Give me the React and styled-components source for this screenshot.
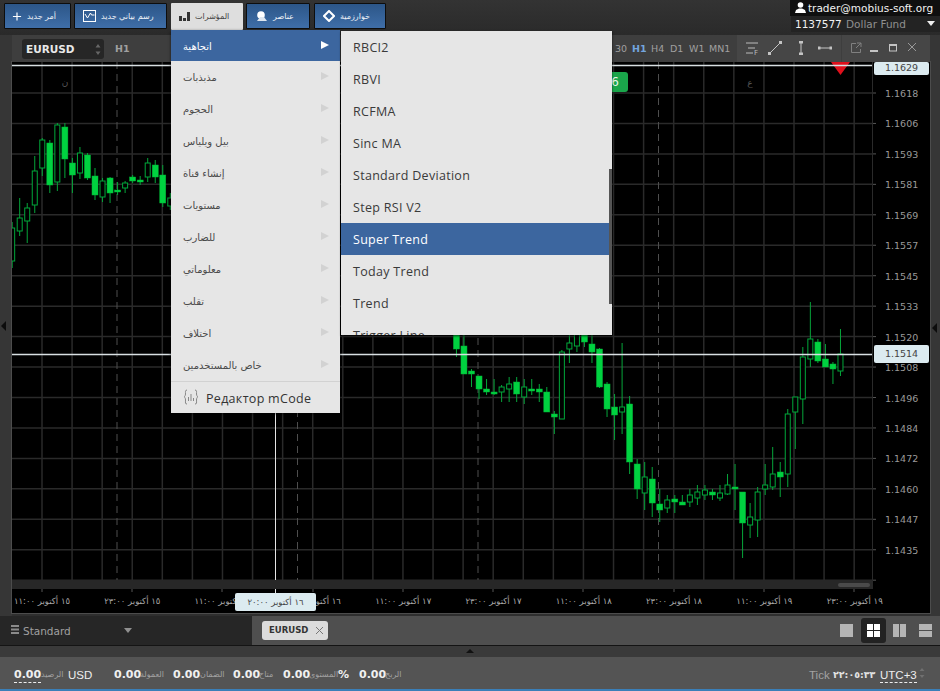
import React from 'react'
import styled, { createGlobalStyle } from 'styled-components'

const GlobalStyle = createGlobalStyle`
    html, body {
        margin: 0;
        padding: 0;
        background: #2b2b2b;
        font-family: "DejaVu Sans", sans-serif;
    }
`

const Page = styled.div`
    position: relative;
    width: 940px;
    height: 691px;
    overflow: hidden;
    background: #2f2f2f;
`

const TopBar = styled.div`
    position: absolute;
    left: 0;
    top: 0;
    width: 940px;
    height: 35px;
    background: linear-gradient(#333333, #2a2a2a);
`

const TopButton = styled.button`
    position: absolute;
    left: ${(p) => p.$left}px;
    top: 3px;
    width: ${(p) => p.$width}px;
    height: ${(p) => (p.$active ? 27 : 26)}px;
    box-sizing: border-box;
    display: flex;
    align-items: center;
    gap: 5px;
    padding: 0 0 0 ${(p) => p.$pad}px;
    border: ${(p) => (p.$active ? 'none' : '1px solid #0d0d0d')};
    border-radius: 1px;
    background: ${(p) => (p.$active ? '#dedede' : 'linear-gradient(#2c5688, #3f6ea8)')};
    color: ${(p) => (p.$active ? '#444' : '#eef2f7')};
    font-family: "DejaVu Sans", sans-serif;
    font-size: 8px;
`

const UserBox = styled.div`
    position: absolute;
    left: 790px;
    top: 0;
    width: 150px;
    height: 16px;
    background: #0f0f0f;
    color: #f2f2f2;
    font-size: 10.5px;
    line-height: 17px;
    white-space: nowrap;
`

const UserIcon = styled.svg`
    position: absolute;
    left: 5px;
    top: 2px;
`

const UserMail = styled.span`
    position: absolute;
    left: 18px;
    top: 0;
`

const AccountBox = styled.div`
    position: absolute;
    left: 791px;
    top: 16px;
    width: 149px;
    height: 16px;
    background: #232323;
    font-size: 10.5px;
    line-height: 17px;
    white-space: nowrap;
`

const AccountNumber = styled.span`
    position: absolute;
    left: 4px;
    color: #f2f2f2;
`

const AccountName = styled.span`
    position: absolute;
    left: 55px;
    color: #909090;
`

const Caret = styled.i`
    position: absolute;
    left: ${(p) => p.$left}px;
    top: ${(p) => p.$top}px;
    width: 0;
    height: 0;
    border-left: 4px solid transparent;
    border-right: 4px solid transparent;
    border-top: 5px solid ${(p) => p.$color};
`

const SideStrip = styled.div`
    position: absolute;
    top: 35px;
    left: ${(p) => p.$left}px;
    width: ${(p) => p.$width}px;
    height: 581px;
    background: #363636;
`

const SideArrow = styled.i`
    position: absolute;
    top: ${(p) => p.$top}px;
    left: ${(p) => p.$left}px;
    width: 0;
    height: 0;
    border-top: 5px solid transparent;
    border-bottom: 5px solid transparent;
    border-right: 5px solid #0c0c0c;
`

const ChartToolbar = styled.div`
    position: absolute;
    left: 12px;
    top: 35px;
    width: 918px;
    height: 27px;
    background: #3e3e3e;
`

const ToolSection = styled.div`
    position: absolute;
    left: ${(p) => p.$left}px;
    top: 0;
    width: ${(p) => p.$width}px;
    height: 27px;
    background: #464646;
`

const SymbolSelect = styled.div`
    position: absolute;
    left: 10px;
    top: 4px;
    width: 82px;
    height: 20px;
    border-radius: 3px;
    background: #262626;
    color: #e8e8e8;
    font-size: 10.5px;
    font-weight: 700;
    line-height: 20px;
    text-indent: 4px;
`

const Spinner = styled.svg`
    position: absolute;
    left: ${(p) => p.$left}px;
    top: ${(p) => p.$top}px;
`

const Timeframe = styled.span`
    position: absolute;
    left: ${(p) => p.$left}px;
    top: 7px;
    color: ${(p) => (p.$active ? '#74a5de' : '#a0a0a0')};
    font-size: 9.5px;
    font-weight: ${(p) => (p.$bold ? 700 : 400)};
    line-height: 14px;
`

const ToolIcon = styled.svg`
    position: absolute;
    left: ${(p) => p.$left}px;
    top: 6px;
`

const ChartArea = styled.div`
    position: absolute;
    left: 12px;
    top: 62px;
    width: 918px;
    height: 551px;
    background: #000;
    overflow: hidden;
`

const ChartFrame = styled.div`
    position: absolute;
    left: 11px;
    top: 61px;
    width: 920px;
    height: 553px;
    box-sizing: border-box;
    border: 1px solid #4c4c4c;
`

const ChartSvg = styled.svg`
    position: absolute;
    left: 0;
    top: 0;
`

const PriceLabel = styled.span`
    position: absolute;
    left: 873px;
    top: ${(p) => p.$top - 62 - 6}px;
    color: #9a9a9a;
    font-size: 9.5px;
    line-height: 14px;
`

const PriceTag = styled.div`
    position: absolute;
    left: 862px;
    top: ${(p) => p.$top}px;
    width: 55px;
    height: ${(p) => p.$height}px;
    box-sizing: border-box;
    border-radius: 2px;
    background: #dcebf0;
    color: #444;
    font-size: 9.5px;
    line-height: ${(p) => p.$line}px;
    text-align: center;
`

const TimeLabel = styled.span`
    position: absolute;
    left: ${(p) => p.$center - 12 - 40}px;
    top: 532px;
    width: 80px;
    color: #a8a8a8;
    font-size: 8.5px;
    line-height: 14px;
    text-align: center;
    white-space: nowrap;
`

const TimeTag = styled.div`
    position: absolute;
    left: 223px;
    top: 531px;
    width: 81px;
    height: 18px;
    border-radius: 2px;
    background: #dcebf0;
    color: #444;
    font-size: 8.5px;
    line-height: 18px;
    text-align: center;
`

const ScrollTrack = styled.div`
    position: absolute;
    left: 0;
    top: 518px;
    width: 861px;
    height: 9px;
    background: #272727;
`

const ScrollThumb = styled.div`
    position: absolute;
    left: 826px;
    top: 3px;
    width: 32px;
    height: 4px;
    border-radius: 2px;
    background: #4a4a4a;
`

const ScaleDivider = styled.div`
    position: absolute;
    left: 860px;
    top: 0;
    width: 1px;
    height: 527px;
    background: #2a2a2a;
`

const GreenBadge = styled.div`
    position: absolute;
    left: 590px;
    top: 10px;
    width: 26px;
    height: 20px;
    box-sizing: border-box;
    padding-right: 9px;
    border-radius: 3px;
    background: #1aa64b;
    color: #e8f7ec;
    font-size: 12px;
    line-height: 20px;
    text-align: right;
`

const MainMenu = styled.div`
    position: absolute;
    left: 171px;
    top: 30px;
    width: 169px;
    height: 383px;
    background: #e6e6e6;
    box-shadow: 0 1px 3px rgba(0, 0, 0, 0.6);
`

const MainItem = styled.div`
    position: relative;
    height: ${(p) => (p.$active ? 31 : 32)}px;
    padding-left: 12px;
    background: ${(p) => (p.$active ? '#3c669f' : 'transparent')};
    color: ${(p) => (p.$active ? '#fff' : '#4b4b4b')};
    font-size: 10px;
    line-height: ${(p) => (p.$active ? 33 : 34)}px;
`

const ItemArrow = styled.i`
    position: absolute;
    left: 150px;
    top: 11px;
    width: 0;
    height: 0;
    border-top: 4px solid transparent;
    border-bottom: 4px solid transparent;
    border-left: 8px solid ${(p) => (p.$active ? '#fff' : '#d2d2d2')};
`

const MenuFooter = styled.div`
    position: relative;
    height: 31px;
    border-top: 1px solid #d2d2d2;
    padding-left: 35px;
    color: #333;
    font-family: "Open Sans", sans-serif;
    font-size: 12.5px;
    line-height: 33px;
    letter-spacing: 0.3px;
`

const CodeIcon = styled.svg`
    position: absolute;
    left: 12px;
    top: 7px;
`

const SubMenu = styled.div`
    position: absolute;
    left: 341px;
    top: 31px;
    width: 271px;
    height: 304px;
    overflow: hidden;
    background: #e6e6e6;
    box-shadow: 0 1px 2px rgba(0, 0, 0, 0.7);
`

const SubItem = styled.div`
    height: 32px;
    padding-left: 12px;
    background: ${(p) => (p.$active ? '#3c669f' : 'transparent')};
    color: ${(p) => (p.$active ? '#fff' : '#3a3a3a')};
    font-family: "Open Sans", sans-serif;
    font-size: 12.5px;
    line-height: 34px;
    letter-spacing: 0.3px;
`

const SubScroll = styled.div`
    position: absolute;
    left: 268px;
    top: 138px;
    width: 3px;
    height: 135px;
    background: #555;
`

const TabBar = styled.div`
    position: absolute;
    left: 0;
    top: 616px;
    width: 940px;
    height: 29px;
    background: #4f4f4f;
`

const ProfilePanel = styled.div`
    position: absolute;
    left: 0;
    top: 0;
    width: 252px;
    height: 29px;
    background: #262626;
    color: #a0a0a0;
    font-size: 10.5px;
    line-height: 30px;
`

const ProfileName = styled.span`
    position: absolute;
    left: 23px;
`

const ChartTab = styled.div`
    position: absolute;
    left: 262px;
    top: 5px;
    width: 66px;
    height: 19px;
    border-radius: 3px;
    background: #dcdcdc;
    color: #333;
    font-size: 8.5px;
    font-weight: 700;
    line-height: 19px;
    text-indent: 7px;
`

const TabClose = styled.svg`
    position: absolute;
    left: 53px;
    top: 5px;
`

const LayoutButton = styled.div`
    position: absolute;
    left: ${(p) => p.$left}px;
    top: 2px;
    width: 25px;
    height: 25px;
    border-radius: 3px;
    background: ${(p) => (p.$active ? '#222' : 'transparent')};
    display: flex;
    align-items: center;
    justify-content: center;
`

const GripStrip = styled.div`
    position: absolute;
    left: 0;
    top: 645px;
    width: 940px;
    height: 12px;
    box-sizing: border-box;
    border-top: 1px solid #141414;
    background: #3a3a3a;
`

const StripArrow = styled.i`
    position: absolute;
    left: 466px;
    top: 3px;
    width: 0;
    height: 0;
    border-left: 4px solid transparent;
    border-right: 4px solid transparent;
    border-bottom: 4px solid #111;
`

const StatusBar = styled.div`
    position: absolute;
    left: 0;
    top: 657px;
    width: 940px;
    height: 32px;
    background: #545454;
`

const BlueLine = styled.div`
    position: absolute;
    left: 0;
    top: 689px;
    width: 940px;
    height: 2px;
    background: #3a7fb8;
`

const StatusValue = styled.span`
    position: absolute;
    left: ${(p) => p.$left}px;
    top: 11px;
    color: #f0f0f0;
    font-size: 11px;
    font-weight: 700;
    line-height: 14px;
    ${(p) => p.$dashed && 'border-bottom: 1px dashed #eee;'}
`

const StatusCaption = styled.span`
    position: absolute;
    left: ${(p) => p.$left}px;
    top: 11px;
    color: #a2a2a2;
    font-size: 8px;
    line-height: 14px;
    white-space: nowrap;
`

const ClockText = styled.span`
    position: absolute;
    left: 833px;
    top: 11px;
    color: #e2e2e2;
    font-size: 9.5px;
    font-weight: 700;
    line-height: 14px;
    white-space: nowrap;
`

const StatusPlain = styled.span`
    position: absolute;
    left: ${(p) => p.$left}px;
    top: 11px;
    color: ${(p) => p.$color};
    font-family: "Liberation Sans", sans-serif;
    font-size: 11.5px;
    line-height: 14px;
    ${(p) => p.$dashed && 'border-bottom: 1px dashed #eee;'}
`

// x of a candle comes from its index, y values are page pixels
// [index, high, low, bodyTop, bodyBottom, filled]
const candles = [
    [-1, 222, 268, 228, 261, 0],
    [0, 198, 236, 218, 231, 0],
    [1, 203, 243, 208, 221, 0],
    [2, 156, 213, 171, 205, 0],
    [3, 138, 176, 140, 168, 0],
    [4, 140, 193, 143, 185, 1],
    [5, 123, 191, 125, 182, 0],
    [6, 123, 178, 127, 159, 1],
    [7, 158, 193, 163, 175, 1],
    [8, 147, 179, 153, 173, 0],
    [9, 153, 180, 155, 178, 1],
    [10, 168, 200, 176, 195, 1],
    [11, 178, 202, 181, 197, 0],
    [12, 177, 203, 178, 193, 1],
    [13, 182, 195, 190, 192, 1],
    [14, 181, 193, 183, 188, 0],
    [15, 175, 183, 177, 181, 1],
    [16, 176, 185, 180, 182, 1],
    [17, 158, 182, 163, 177, 0],
    [18, 160, 183, 165, 177, 1],
    [19, 165, 207, 175, 203, 1],
    [20, 193, 210, 198, 206, 0],
    [58, 330, 357, 330, 349, 1],
    [59, 330, 374, 346, 374, 1],
    [60, 369, 387, 371, 374, 1],
    [61, 376, 399, 376, 389, 1],
    [62, 379, 395, 389, 392, 1],
    [63, 379, 395, 392, 394, 1],
    [64, 385, 402, 387, 392, 0],
    [65, 377, 402, 384, 389, 0],
    [66, 377, 402, 382, 394, 1],
    [67, 379, 404, 387, 397, 0],
    [68, 379, 395, 389, 391, 1],
    [69, 384, 402, 389, 392, 1],
    [70, 387, 412, 392, 412, 1],
    [71, 411, 434, 414, 417, 1],
    [72, 350, 419, 352, 419, 0],
    [73, 330, 363, 343, 349, 0],
    [74, 330, 352, 330, 346, 0],
    [75, 330, 347, 330, 342, 1],
    [76, 330, 363, 344, 352, 1],
    [77, 348, 388, 349, 387, 1],
    [78, 382, 417, 384, 409, 1],
    [79, 394, 440, 407, 415, 1],
    [80, 343, 434, 407, 412, 0],
    [81, 396, 474, 404, 462, 1],
    [82, 459, 499, 464, 489, 1],
    [83, 462, 510, 477, 493, 0],
    [84, 467, 517, 479, 503, 1],
    [85, 489, 522, 504, 510, 1],
    [86, 495, 513, 500, 508, 0],
    [87, 495, 513, 499, 502, 1],
    [88, 495, 505, 502, 505, 1],
    [89, 489, 507, 495, 502, 0],
    [90, 485, 505, 492, 498, 0],
    [91, 485, 500, 490, 495, 0],
    [92, 489, 500, 492, 495, 1],
    [93, 485, 501, 493, 498, 0],
    [94, 474, 495, 485, 494, 0],
    [95, 464, 510, 487, 489, 1],
    [96, 492, 558, 492, 523, 1],
    [97, 503, 538, 517, 525, 0],
    [98, 487, 537, 492, 520, 0],
    [99, 464, 495, 485, 489, 0],
    [100, 447, 490, 474, 487, 0],
    [101, 462, 497, 472, 477, 1],
    [102, 409, 487, 414, 474, 0],
    [103, 397, 449, 397, 412, 0],
    [104, 347, 424, 357, 399, 0],
    [105, 302, 367, 339, 359, 0],
    [106, 339, 363, 342, 361, 1],
    [107, 344, 367, 359, 367, 1],
    [108, 362, 384, 364, 369, 1],
    [109, 329, 376, 354, 371, 0],
]

const priceLabels = ['1.1618', '1.1606', '1.1593', '1.1581', '1.1569', '1.1557', '1.1545', '1.1533', '1.1520', '1.1508', '1.1496', '1.1484', '1.1472', '1.1460', '1.1447', '1.1435']

const timeLabels = ['١٥ أكتوبر ١١:٠٠', '١٥ أكتوبر ٢٣:٠٠', '١٦ أكتوبر ١١:٠٠', '١٦ أكتوبر ٢٣:٠٠', '١٧ أكتوبر ١١:٠٠', '١٧ أكتوبر ٢٣:٠٠', '١٨ أكتوبر ١١:٠٠', '١٨ أكتوبر ٢٣:٠٠', '١٩ أكتوبر ١١:٠٠', '١٩ أكتوبر ٢٣:٠٠']

const mainItems = ['اتجاهية', 'مذبذبات', 'الحجوم', 'بيل ويلياس', 'إنشاء قناة', 'مستويات', 'للضارب', 'معلوماتي', 'تقلب', 'اختلاف', 'خاص بالمستخدمين']

const subItems = ['RBCI2', 'RBVI', 'RCFMA', 'Sinc MA', 'Standard Deviation', 'Step RSI V2', 'Super Trend', 'Today Trend', 'Trend', 'Trigger Line']

const timeframes = [
    { label: '30', left: 603 },
    { label: 'H1', left: 620, active: true },
    { label: 'H4', left: 639 },
    { label: 'D1', left: 658 },
    { label: 'W1', left: 677 },
    { label: 'MN1', left: 697 },
]

const candleX = (i) => 19.7 + 7.53 * i
const priceY = (k) => 93 + 30.45 * k

const Chart = () => {
    const verticals = Array.from({ length: 28 }, (_, k) => 42 + 30.08 * k)
    const horizontals = Array.from({ length: 17 }, (_, k) => priceY(k))
    const dashed = [117, 297.5, 478, 658.5]

    return (
        <ChartSvg width="918" height="551" viewBox="12 62 918 551">
            {verticals.map((x) => (
                <line key={x} x1={x} x2={x} y1="62" y2="580" stroke="#2a2a2a" strokeWidth="1.5" />
            ))}
            {horizontals.map((y) => (
                <line key={y} x1="12" x2="873" y1={y} y2={y} stroke="#2a2a2a" strokeWidth="1.5" />
            ))}
            {horizontals.map((y) => (
                <line key={y} x1="873" x2="876" y1={y} y2={y} stroke="#555" />
            ))}
            {dashed.map((x) => (
                <line key={x} x1={x} x2={x} y1="62" y2="580" stroke="#4e4e4e" strokeDasharray="7 5" />
            ))}
            {candles.map(([i, high, low, top, bottom, filled]) => {
                const x = candleX(i)
                return (
                    <g key={i}>
                        <line x1={x} x2={x} y1={high} y2={top} stroke="#06a53a" strokeWidth="1" />
                        <line x1={x} x2={x} y1={bottom} y2={low} stroke="#06a53a" strokeWidth="1" />
                        {filled ? (
                            <rect x={x - 3} y={top} width="6" height={bottom - top} fill="#00d240" stroke="#00b437" strokeWidth="0.5" />
                        ) : (
                            <rect x={x - 2.5} y={top} width="5" height={bottom - top} fill="#000" stroke="#00a83a" strokeWidth="1" />
                        )}
                    </g>
                )
            })}
            <polygon points="831,62 850,62 840.5,75" fill="#e0101c" />
            <line x1="12" x2="873" y1="65.5" y2="65.5" stroke="#d8dfe2" strokeWidth="1.4" />
            <line x1="12" x2="873" y1="354.5" y2="354.5" stroke="#d8dfe2" strokeWidth="1.4" />
            <line x1="275.5" x2="275.5" y1="410" y2="594" stroke="#e4e4e4" />
            <text x="65" y="85" fill="#555" fontSize="9" textAnchor="middle">ن</text>
            <text x="750" y="86" fill="#555" fontSize="9" textAnchor="middle">ع</text>
            {[42, 132, 222, 313, 403, 493, 583, 674, 764, 854].map((x) => (
                <line key={x} x1={x} x2={x} y1="589" y2="592" stroke="#555" />
            ))}
        </ChartSvg>
    )
}

const App = () => {
    return (
        <Page>
            <GlobalStyle />
            <TopBar>
                <TopButton $left={4} $width={67} $pad={7}>
                    <svg width="10" height="11" viewBox="0 0 11 11"><path d="M5.5 1v9M1 5.5h9" stroke="#fff" strokeWidth="1.3" /></svg>
                    <span>أمر جديد</span>
                </TopButton>
                <TopButton $left={74} $width={93} $pad={8}>
                    <svg width="13" height="12" viewBox="0 0 13 12"><rect x="0.5" y="0.5" width="12" height="11" fill="none" stroke="#fff" /><path d="M2 4l2.5 4 3-5 1 2h3" fill="none" stroke="#fff" /></svg>
                    <span>رسم بياني جديد</span>
                </TopButton>
                <TopButton $left={171} $width={72} $pad={8} $active>
                    <svg width="11" height="9" viewBox="0 0 11 9"><path d="M0 4h3v5H0zM4 6h3v3H4zM8 0h3v9H8z" fill="#333" /></svg>
                    <span>المؤشرات</span>
                </TopButton>
                <TopButton $left={246} $width={64} $pad={9}>
                    <svg width="12" height="10" viewBox="0 0 12 10"><circle cx="5" cy="4" r="3.8" fill="#fff" /><path d="M1 10h10L8 6H4z" fill="#dfe7f0" /></svg>
                    <span>عناصر</span>
                </TopButton>
                <TopButton $left={314} $width={72} $pad={8}>
                    <svg width="12" height="12" viewBox="0 0 12 12"><path d="M6 1l5 5-5 5-5-5z" fill="none" stroke="#fff" strokeWidth="2" /></svg>
                    <span>خوارزمية</span>
                </TopButton>
                <UserBox>
                    <UserIcon width="11" height="12" viewBox="0 0 11 12">
                        <circle cx="5.5" cy="3" r="2.8" fill="#fff" />
                        <path d="M0 11l1-3 3-1.5h3L10 8l1 3z" fill="#fff" />
                    </UserIcon>
                    <UserMail>trader@mobius-soft.org</UserMail>
                </UserBox>
                <AccountBox>
                    <AccountNumber>1137577</AccountNumber>
                    <AccountName>Dollar Fund</AccountName>
                    <Caret $left={136} $top={5} $color="#eee" />
                </AccountBox>
            </TopBar>

            <SideStrip $left={0} $width={12}>
                <SideArrow $top={286} $left={1} />
            </SideStrip>
            <SideStrip $left={930} $width={10}>
                <SideArrow $top={288} $left={2} />
            </SideStrip>

            <ChartFrame />
            <ChartArea>
                <Chart />
                <ScaleDivider />
                <ScrollTrack>
                    <ScrollThumb />
                </ScrollTrack>
                {priceLabels.map((label, k) => (
                    <PriceLabel key={label} $top={priceY(k)}>{label}</PriceLabel>
                ))}
                <PriceTag $top={0} $height={13} $line={11}>1.1629</PriceTag>
                <PriceTag $top={283} $height={18} $line={18}>1.1514</PriceTag>
                <GreenBadge>6</GreenBadge>
                {timeLabels.map((label, k) => (
                    <TimeLabel key={label} $center={42 + 90.3 * k}>{label}</TimeLabel>
                ))}
                <TimeTag>١٦ أكتوبر ٢٠:٠٠</TimeTag>
            </ChartArea>

            <ChartToolbar>
                <SymbolSelect>
                    EURUSD
                    <Spinner $left={73} $top={5} width="6" height="11" viewBox="0 0 6 11">
                        <path d="M3 0l2.5 3.5h-5zM3 11L.5 7.500h5z" fill="#666" />
                    </Spinner>
                </SymbolSelect>
                <Timeframe $left={103} $bold>H1</Timeframe>
                {timeframes.map((tf) => (
                    <Timeframe key={tf.label} $left={tf.left} $active={tf.active} $bold={tf.active}>{tf.label}</Timeframe>
                ))}
                <ToolSection $left={725} $width={104} />
                <ToolSection $left={830} $width={88} />
                <ToolIcon $left={733} width="14" height="14" viewBox="0 0 14 14">
                    <path d="M1 2h12M3 7h7M1 12h7" stroke="#bbb" />
                    <text x="9" y="14" fontSize="7" fill="#bbb">F</text>
                </ToolIcon>
                <ToolIcon $left={756} width="14" height="14" viewBox="0 0 14 14">
                    <path d="M1 13L13 1" stroke="#c4c4c4" />
                    <path d="M0 11h3v3H0zM11 0h3v3h-3z" fill="#c4c4c4" />
                </ToolIcon>
                <ToolIcon $left={782} width="14" height="14" viewBox="0 0 14 14">
                    <path d="M7 1v12" stroke="#c4c4c4" />
                    <path d="M5 0h4v2.500H5zM5 11.500h4V14H5z" fill="#c4c4c4" />
                </ToolIcon>
                <ToolIcon $left={806} width="14" height="14" viewBox="0 0 14 14">
                    <path d="M1 7h12" stroke="#c4c4c4" />
                    <path d="M0 5.500h2.500v3H0zM11.500 5.500H14v3h-2.500z" fill="#c4c4c4" />
                </ToolIcon>
                <ToolIcon $left={837} width="14" height="14" viewBox="0 0 14 14">
                    <path d="M7 2.500H2.500v9h9V8M8 2h4v4M12 2L7 7" fill="none" stroke="#808080" />
                </ToolIcon>
                <ToolIcon $left={856} width="14" height="14" viewBox="0 0 14 14">
                    <path d="M2 10h8" stroke="#c4c4c4" strokeWidth="2" />
                </ToolIcon>
                <ToolIcon $left={875} width="14" height="14" viewBox="0 0 14 14">
                    <rect x="2.500" y="4" width="7" height="6" fill="none" stroke="#c4c4c4" />
                    <path d="M2 4h8" stroke="#c4c4c4" strokeWidth="2" />
                </ToolIcon>
                <ToolIcon $left={894} width="14" height="14" viewBox="0 0 14 14">
                    <path d="M2 2l8 8M10 2l-8 8" stroke="#999" />
                </ToolIcon>
            </ChartToolbar>

            <MainMenu>
                {mainItems.map((label, i) => (
                    <MainItem key={label} $active={i === 0}>
                        {label}
                        <ItemArrow $active={i === 0} />
                    </MainItem>
                ))}
                <MenuFooter>
                    <CodeIcon width="16" height="16" viewBox="0 0 16 16">
                        <path d="M4 1C2 1 2.500 3 2.500 5S1 8 1 8s1.500 0 1.500 3S2 15 4 15M12 1c2 0 1.500 2 1.500 4S15 8 15 8s-1.500 0-1.500 3 .5 4-1.500 4" fill="none" stroke="#888" />
                        <path d="M5.500 8v4M8 5v7M10.500 9v3" stroke="#888" />
                    </CodeIcon>
                    Редактор mCode
                </MenuFooter>
            </MainMenu>

            <SubMenu>
                {subItems.map((label) => (
                    <SubItem key={label} $active={label === 'Super Trend'}>{label}</SubItem>
                ))}
                <SubScroll />
            </SubMenu>

            <TabBar>
                <ProfilePanel>
                    <Spinner $left={11} $top={9} width="8" height="9" viewBox="0 0 8 9">
                        <path d="M0 0h8v2H0zM0 3.500h8v2H0zM0 7h8v2H0z" fill="#8a8a8a" />
                    </Spinner>
                    <ProfileName>Standard</ProfileName>
                    <Caret $left={124} $top={12} $color="#8f8f8f" />
                </ProfilePanel>
                <ChartTab>
                    EURUSD
                    <TabClose width="9" height="9" viewBox="0 0 9 9">
                        <path d="M1 1l7 7M8 1L1 8" stroke="#777" />
                    </TabClose>
                </ChartTab>
                <LayoutButton $left={834}>
                    <svg width="13" height="13"><rect width="13" height="13" fill="#b5b5b5" /></svg>
                </LayoutButton>
                <LayoutButton $left={861} $active>
                    <svg width="13" height="13"><path d="M0 0h6v6H0zM7 0h6v6H7zM0 7h6v6H0zM7 7h6v6H7z" fill="#fff" /></svg>
                </LayoutButton>
                <LayoutButton $left={887}>
                    <svg width="13" height="13"><path d="M0 0h6v13H0zM7 0h6v13H7z" fill="#b5b5b5" /></svg>
                </LayoutButton>
                <LayoutButton $left={913}>
                    <svg width="13" height="13"><path d="M0 0h13v6H0zM0 7h13v6H0z" fill="#b5b5b5" /></svg>
                </LayoutButton>
            </TabBar>

            <GripStrip>
                <StripArrow />
            </GripStrip>

            <StatusBar>
                <StatusValue $left={14} $dashed>0.00</StatusValue>
                <StatusCaption $left={41}>الرصيد</StatusCaption>
                <StatusPlain $left={68} $color="#eee">USD</StatusPlain>
                <StatusValue $left={114}>0.00</StatusValue>
                <StatusCaption $left={140}>العمولة</StatusCaption>
                <StatusValue $left={173}>0.00</StatusValue>
                <StatusCaption $left={200}>الضمان</StatusCaption>
                <StatusValue $left={233}>0.00</StatusValue>
                <StatusCaption $left={259}>متاح</StatusCaption>
                <StatusValue $left={283}>0.00</StatusValue>
                <StatusCaption $left={309}>المستوى</StatusCaption>
                <StatusValue $left={338}>%</StatusValue>
                <StatusValue $left={359}>0.00</StatusValue>
                <StatusCaption $left={385}>الربح</StatusCaption>
                <StatusPlain $left={809} $color="#a2a2a2">Tick</StatusPlain>
                <ClockText>٢٢:٠٥:٣٣</ClockText>
                <StatusPlain $left={880} $color="#eee" $dashed>UTC+3</StatusPlain>
                <Spinner $left={919} $top={10} width="6" height="12" viewBox="0 0 6 12">
                    <path d="M3 1l2.500 3h-5zM3 11L.5 8h5z" fill="#707070" />
                </Spinner>
            </StatusBar>
            <BlueLine />
        </Page>
    )
}

export default App
